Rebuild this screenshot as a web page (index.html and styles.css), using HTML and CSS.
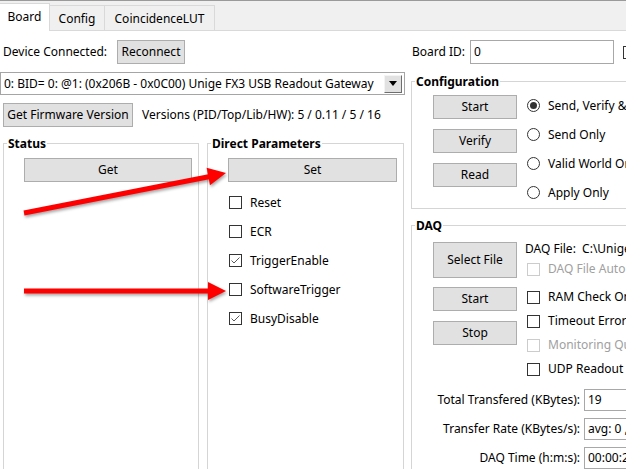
FILE: index.html
```html
<!DOCTYPE html>
<html>
<head>
<meta charset="utf-8">
<link rel="stylesheet" href="styles.css">
</head>
<body>
<div class="window">
  <div class="tabstrip">
    <div class="tab tab-board active">Board</div>
    <div class="tab tab-config">Config</div>
    <div class="tab tab-lut">CoincidenceLUT</div>
  </div>
  <div class="page">
    <div class="row-left">
      <span class="lbl lbl-device">Device Connected:</span>
      <button class="btn btn-reconnect">Reconnect</button>
    </div>
    <div class="row-right">
      <span class="lbl lbl-boardid">Board ID:</span>
      <div class="input input-boardid">0</div>
      <span class="cb cb-edge"></span>
    </div>

    <div class="leftcol">
      <div class="combo">
        <span class="combo-text">0: BID= 0: @1: (0x206B - 0x0C00) Unige FX3 USB Readout Gateway</span>
        <span class="combo-btn"><span class="tri"></span></span>
      </div>
      <div class="fwrow">
        <button class="btn btn-fw">Get Firmware Version</button>
        <span class="fwtext">Versions (PID/Top/Lib/HW): 5 / 0.11 / 5 / 16</span>
      </div>
      <div class="groups">
        <fieldset class="group g-status">
          <legend>Status</legend>
          <div class="gbody body-status">
            <button class="btn btn-wide">Get</button>
          </div>
        </fieldset>
        <fieldset class="group g-direct">
          <legend>Direct Parameters</legend>
          <div class="gbody body-direct">
            <button class="btn btn-wide">Set</button>
            <div class="checklist">
              <div class="crow"><span class="cb"></span><span>Reset</span></div>
              <div class="crow"><span class="cb"></span><span>ECR</span></div>
              <div class="crow"><span class="cb checked"><svg viewBox="0 0 11 11" width="11" height="11"><polyline points="1.5,5.5 4,8 9.5,2.5" fill="none" stroke="#5a5a5a" stroke-width="1"/></svg></span><span>TriggerEnable</span></div>
              <div class="crow"><span class="cb"></span><span>SoftwareTrigger</span></div>
              <div class="crow"><span class="cb checked"><svg viewBox="0 0 11 11" width="11" height="11"><polyline points="1.5,5.5 4,8 9.5,2.5" fill="none" stroke="#5a5a5a" stroke-width="1"/></svg></span><span>BusyDisable</span></div>
            </div>
          </div>
        </fieldset>
      </div>
    </div>

    <div class="rightcol">
      <fieldset class="group g-config">
        <legend>Configuration</legend>
        <div class="gbody body-config">
          <div class="btncol cfg-btns">
            <button class="btn btn-side">Start</button>
            <button class="btn btn-side">Verify</button>
            <button class="btn btn-side">Read</button>
          </div>
          <div class="radiocol">
            <div class="rrow"><span class="rb selected"></span><span>Send, Verify &amp; Read</span></div>
            <div class="rrow"><span class="rb"></span><span>Send Only</span></div>
            <div class="rrow"><span class="rb"></span><span>Valid World Only</span></div>
            <div class="rrow"><span class="rb"></span><span>Apply Only</span></div>
          </div>
        </div>
      </fieldset>
      <fieldset class="group g-daq">
        <legend>DAQ</legend>
        <div class="gbody body-daq">
          <div class="daqtop">
            <div class="btncol daq-btns">
              <button class="btn btn-side btn-select">Select File</button>
              <button class="btn btn-side btn-start">Start</button>
              <button class="btn btn-side btn-stop">Stop</button>
            </div>
            <div class="daqopts">
              <div class="daqfile">DAQ File:&nbsp; C:\Unige\FX3\data\daq_output.bin</div>
              <div class="orow disabled"><span class="cb"></span><span>DAQ File Auto Increment</span></div>
              <div class="orow first"><span class="cb"></span><span>RAM Check Only</span></div>
              <div class="orow"><span class="cb"></span><span>Timeout Error Check</span></div>
              <div class="orow disabled"><span class="cb"></span><span>Monitoring Queue</span></div>
              <div class="orow"><span class="cb"></span><span>UDP Readout</span></div>
            </div>
          </div>
          <div class="stats">
            <span class="slbl">Total Transfered (KBytes):</span>
            <div class="input sinput">19</div>
            <span class="slbl">Transfer Rate (KBytes/s):</span>
            <div class="input sinput">avg: 0 , inst: 0</div>
            <span class="slbl">DAQ Time (h:m:s):</span>
            <div class="input sinput">00:00:25</div>
          </div>
        </div>
      </fieldset>
    </div>
  </div>

  <svg class="arrows" width="626" height="469" viewBox="0 0 626 469">
    <g class="arrow">
      <line x1="24" y1="212" x2="210" y2="175.5" stroke="#ff0000" stroke-width="5"/>
      <polygon points="226,172 210,184.3 206.6,166.7" fill="#ff0000"/>
    </g>
    <g class="arrow">
      <line x1="24" y1="290" x2="210" y2="290" stroke="#ff0000" stroke-width="5"/>
      <polygon points="226,290 208,281 208,299" fill="#ff0000"/>
    </g>
  </svg>
</div>
</body>
</html>
```
FILE: styles.css
```css
* { box-sizing: border-box; }
html, body { margin: 0; padding: 0; }
body {
  width: 626px;
  height: 469px;
  overflow: hidden;
  background: #fff;
  font-family: "Noto Sans", "Open Sans", sans-serif;
  font-size: 12px;
  line-height: 16px;
  color: #000;
}
button { font: inherit; color: inherit; margin: 0; }

.window {
  position: relative;
  width: 626px;
  height: 469px;
  overflow: hidden;
  border-top: 1px solid #9a9a9a;
}

/* tabs */
.tabstrip {
  height: 30px;
  background: #f0f0f0;
  display: flex;
  align-items: flex-end;
  border-bottom: 1px solid #d9d9d9;
}
.tab {
  display: flex;
  align-items: center;
  justify-content: center;
  height: 25px;
  border-top: 1px solid #d9d9d9;
  border-right: 1px solid #d9d9d9;
  background: #f0f0f0;
  white-space: nowrap;
}
.tab-board {
  width: 50px;
  height: 28px;
  margin-bottom: -1px;
  background: #fff;
  position: relative;
  padding-bottom: 2px;
}
.tab-config { width: 55px; padding-top: 1px; }
.tab-lut { width: 110px; padding-top: 1px; }

/* page grid */
.page {
  display: grid;
  grid-template-columns: 405px 215px;
  column-gap: 6px;
  row-gap: 8px;
  padding-top: 9px;
}
.row-left {
  display: flex;
  align-items: center;
  height: 24px;
  padding-left: 3px;
}
.lbl-device { width: 114px; white-space: nowrap; }
.row-right {
  display: flex;
  align-items: center;
  height: 24px;
  padding-left: 1px;
  white-space: nowrap;
}
.lbl-boardid { width: 58px; flex: none; }
.input-boardid {
  width: 144px;
  height: 24px;
  flex: none;
}
.cb-edge { margin-left: 9px; flex: none; }

.btn {
  background: #e1e1e1;
  border: 1px solid #adadad;
  padding: 0;
  height: 24px;
  display: flex;
  align-items: center;
  justify-content: center;
  white-space: nowrap;
}
.btn-reconnect { width: 68px; }

.input {
  border: 1px solid #a8a8a8;
  background: #fff;
  display: flex;
  align-items: center;
  padding-left: 3px;
  white-space: nowrap;
  overflow: hidden;
}

/* left column */
.leftcol { display: flex; flex-direction: column; }
.combo {
  height: 23px;
  border: 1px solid #a5a5a5;
  display: flex;
  align-items: center;
  padding-left: 3px;
  padding-right: 2px;
}
.combo-text {
  flex: 1;
  white-space: nowrap;
  overflow: hidden;
}
.combo-btn {
  width: 18px;
  height: 18px;
  background: #e1e1e1;
  border-top: 1px solid #f4f4f4;
  border-left: 1px solid #f4f4f4;
  border-right: 1px solid #6e6e6e;
  border-bottom: 1px solid #6e6e6e;
  display: flex;
  align-items: center;
  justify-content: center;
  flex: none;
}
.tri {
  width: 0;
  height: 0;
  border-left: 4px solid transparent;
  border-right: 4px solid transparent;
  border-top: 5px solid #000;
}

.fwrow {
  display: flex;
  align-items: center;
  margin-top: 8px;
  padding-left: 3px;
  height: 24px;
  gap: 9px;
}
.btn-fw { width: 130px; }
.fwtext { white-space: nowrap; }

.groups {
  display: flex;
  margin-top: 9px;
  padding-left: 3px;
  gap: 8px;
  height: 360px;
}

/* group boxes */
.group {
  margin: 0;
  padding: 0;
  border: 1px solid #d5d5d5;
  min-width: 0;
}
.group legend {
  font-weight: bold;
  line-height: 15px;
  padding: 0 1px;
  margin-left: 3px;
}
.g-status { width: 196px; }
.g-direct { width: 197px; }

.body-status { padding: 7px 6px 0 20px; }
.body-direct { padding: 7px 6px 0 20px; }
.btn-wide { width: 100%; }

.checklist { margin-top: 6px; padding-left: 1px; }
.crow {
  display: flex;
  align-items: center;
  height: 29px;
  gap: 8px;
  white-space: nowrap;
}

.cb {
  width: 13px;
  height: 13px;
  border: 1px solid #333;
  background: #fff;
  display: inline-flex;
  align-items: center;
  justify-content: center;
  flex: none;
}
.cb svg { display: block; }

.rb {
  width: 13px;
  height: 13px;
  border: 1px solid #333;
  border-radius: 50%;
  background: #fff;
  display: inline-flex;
  align-items: center;
  justify-content: center;
  flex: none;
}
.rb.selected::after {
  content: "";
  width: 7px;
  height: 7px;
  border-radius: 50%;
  background: #333;
}

/* right column */
.rightcol { display: flex; flex-direction: column; min-width: 0; }
.g-config { width: 260px; margin-top: 2px; }
.body-config {
  display: flex;
  padding-left: 21px;
  padding-bottom: 1px;
}
.btncol { display: flex; flex-direction: column; width: 84px; flex: none; }
.cfg-btns { margin-top: 6px; gap: 10px; }
.btn-side { width: 84px; }
.radiocol { margin-left: 10px; margin-top: 2px; }
.rrow {
  display: flex;
  align-items: center;
  height: 29px;
  gap: 8px;
  white-space: nowrap;
}

.g-daq { width: 260px; margin-top: 9px; height: 300px; }
.daqtop { display: flex; padding-left: 21px; }
.daq-btns { margin-top: 9px; }
.btn-select { height: 36px; }
.btn-start { margin-top: 9px; }
.btn-stop { margin-top: 10px; }
.daqopts { margin-left: 8px; white-space: nowrap; }
.daqfile { margin-top: 8px; height: 16px; }
.orow {
  display: flex;
  align-items: center;
  height: 24px;
  gap: 8px;
  padding-left: 2px;
}
.orow.first { margin-top: 4px; }
.orow.disabled { color: #a0a0a0; }
.orow.disabled .cb { border-color: #cccccc; }

.stats {
  display: grid;
  grid-template-columns: 168px 200px;
  column-gap: 4px;
  row-gap: 7px;
  margin-top: 8px;
  align-items: center;
}
.slbl { text-align: right; white-space: nowrap; }
.sinput { height: 22px; }

/* annotation overlay */
.arrows {
  position: absolute;
  left: 0;
  top: 0;
  pointer-events: none;
}
.arrow { filter: drop-shadow(1px 2px 1.5px rgba(0,0,0,0.35)); }
```
